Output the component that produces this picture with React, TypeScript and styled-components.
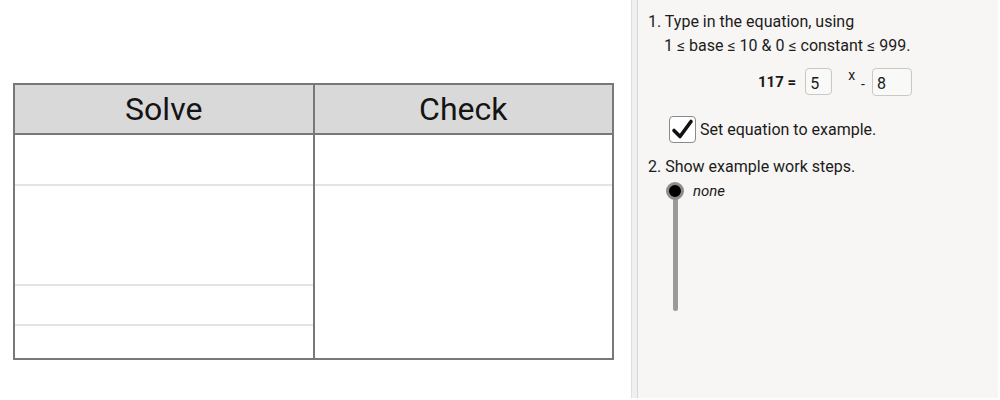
import React, { FC } from 'react';
import styled, { createGlobalStyle } from 'styled-components';

const GlobalStyle = createGlobalStyle`
  html, body {
    margin: 0;
    padding: 0;
    background: #ffffff;
  }
  body {
    font-family: Roboto, 'Liberation Sans', Arial, sans-serif;
    color: #1a1a1a;
  }
`;

const Page = styled.div`
  display: flex;
  width: 998px;
  height: 398px;
  overflow: hidden;
`;

const LeftPane = styled.div`
  width: 631px;
  flex: none;
  background: #ffffff;
  padding: 83px 0 0 13px;
  box-sizing: border-box;
`;

const Divider = styled.div`
  width: 7px;
  flex: none;
  box-sizing: border-box;
  background: #f0f0f0;
  border-left: 1px solid #dedede;
  border-right: 1px solid #d6d6d6;
`;

const RightPane = styled.div`
  flex: 1;
  background: #f7f6f4;
  padding: 10px 0 0 10px;
  box-sizing: border-box;
  display: flex;
  flex-direction: column;
`;

// таблица решения
const Table = styled.div`
  width: 601px;
  box-sizing: border-box;
  border: 2px solid #787878;
  display: flex;
  flex-direction: column;
`;

const HeaderRow = styled.div`
  display: flex;
  height: 50px;
  box-sizing: border-box;
  border-bottom: 2px solid #787878;
  background: #d9d9d9;
`;

const HeaderCell = styled.div<{ $divider?: boolean }>`
  flex: 1;
  display: flex;
  align-items: center;
  justify-content: center;
  font-size: 32px;
  color: #141414;
  border-left: ${({ $divider }) => ($divider ? '2px solid #787878' : 'none')};
`;

const Body = styled.div`
  display: flex;
`;

const Column = styled.div<{ $divider?: boolean }>`
  flex: 1;
  display: flex;
  flex-direction: column;
  border-left: ${({ $divider }) => ($divider ? '2px solid #787878' : 'none')};
`;

const Cell = styled.div<{ $h: number; $first?: boolean }>`
  height: ${({ $h }) => $h}px;
  box-sizing: border-box;
  border-top: ${({ $first }) => ($first ? 'none' : '2px solid #e4e4e4')};
  background: #ffffff;
`;

// правая панель
const Line = styled.div<{ $indent?: number; $mt?: number }>`
  font-size: 16px;
  line-height: 24px;
  height: 24px;
  white-space: nowrap;
  padding-left: ${({ $indent }) => $indent || 0}px;
  margin-top: ${({ $mt }) => $mt || 0}px;
  color: #1c1c1c;
`;

const EquationRow = styled.div`
  display: flex;
  align-items: center;
  height: 29px;
  margin: 9px 0 0 110px;
`;

const Bold = styled.span`
  font-weight: 700;
  font-size: 15px;
  margin-right: 9px;
`;

const InputBox = styled.div<{ $w: number; $h: number }>`
  width: ${({ $w }) => $w}px;
  height: ${({ $h }) => $h}px;
  box-sizing: border-box;
  border: 1px solid #c8c8c8;
  border-radius: 4px;
  background: #f9f9f8;
  font-size: 16px;
  padding: 5px 0 0 4px;
  line-height: 20px;
`;

const Sup = styled.span`
  font-size: 14px;
  align-self: flex-start;
  margin: 0 6px 0 16px;
`;

const Dash = styled.span`
  font-size: 14px;
  align-self: flex-end;
  margin: 0 7px 4px 0;
`;

const CheckRow = styled.div`
  display: flex;
  align-items: center;
  margin: 20px 0 0 21px;
  height: 27px;
`;

const CheckBox = styled.div`
  width: 27px;
  height: 27px;
  box-sizing: border-box;
  border: 1px solid #8a8a8a;
  border-radius: 4px;
  background: #ffffff;
  display: flex;
  align-items: center;
  justify-content: center;
  margin-right: 4px;
`;

const CheckLabel = styled.span`
  font-size: 16px;
`;

const SliderRow = styled.div`
  display: flex;
  align-items: flex-start;
  margin: 3px 0 0 18px;
`;

const Slider = styled.div`
  width: 18px;
  display: flex;
  flex-direction: column;
  align-items: center;
`;

const Knob = styled.div`
  width: 18px;
  height: 18px;
  box-sizing: border-box;
  border-radius: 50%;
  background: #000000;
  border: 3px solid #8c8c8c;
  position: relative;
  z-index: 1;
`;

const Track = styled.div`
  width: 5px;
  height: 120px;
  margin-top: -9px;
  border-radius: 3px;
  background: #9a9a9a;
`;

const SliderLabel = styled.span`
  font-size: 15px;
  font-style: italic;
  line-height: 18px;
  margin-left: 9px;
`;

const left = [49, 100, 40, 34];
const right = [49, 174];

const App: FC = () => (
  <>
    <GlobalStyle />
    <Page>
      <LeftPane>
        <Table>
          <HeaderRow>
            <HeaderCell>Solve</HeaderCell>
            <HeaderCell $divider>Check</HeaderCell>
          </HeaderRow>
          <Body>
            <Column>
              {left.map((h, i) => (
                <Cell key={i} $h={h} $first={i === 0} />
              ))}
            </Column>
            <Column $divider>
              {right.map((h, i) => (
                <Cell key={i} $h={h} $first={i === 0} />
              ))}
            </Column>
          </Body>
        </Table>
      </LeftPane>
      <Divider />
      <RightPane>
        <Line>1. Type in the equation, using</Line>
        <Line $indent={16}>1 ≤ base ≤ 10 &amp; 0 ≤ constant ≤ 999.</Line>
        <EquationRow>
          <Bold>117 =</Bold>
          <InputBox $w={27} $h={27}>5</InputBox>
          <Sup>x</Sup>
          <Dash>-</Dash>
          <InputBox $w={40} $h={28}>8</InputBox>
        </EquationRow>
        <CheckRow>
          <CheckBox>
            <svg width="23" height="23" viewBox="0 0 23 23">
              <path d="M3 12.5 L9 18.5 L20 3.5" fill="none" stroke="#111" strokeWidth="3.6" strokeLinecap="round" strokeLinejoin="round" />
            </svg>
          </CheckBox>
          <CheckLabel>Set equation to example.</CheckLabel>
        </CheckRow>
        <Line $mt={12}>2. Show example work steps.</Line>
        <SliderRow>
          <Slider>
            <Knob />
            <Track />
          </Slider>
          <SliderLabel>none</SliderLabel>
        </SliderRow>
      </RightPane>
    </Page>
  </>
);

export default App;
